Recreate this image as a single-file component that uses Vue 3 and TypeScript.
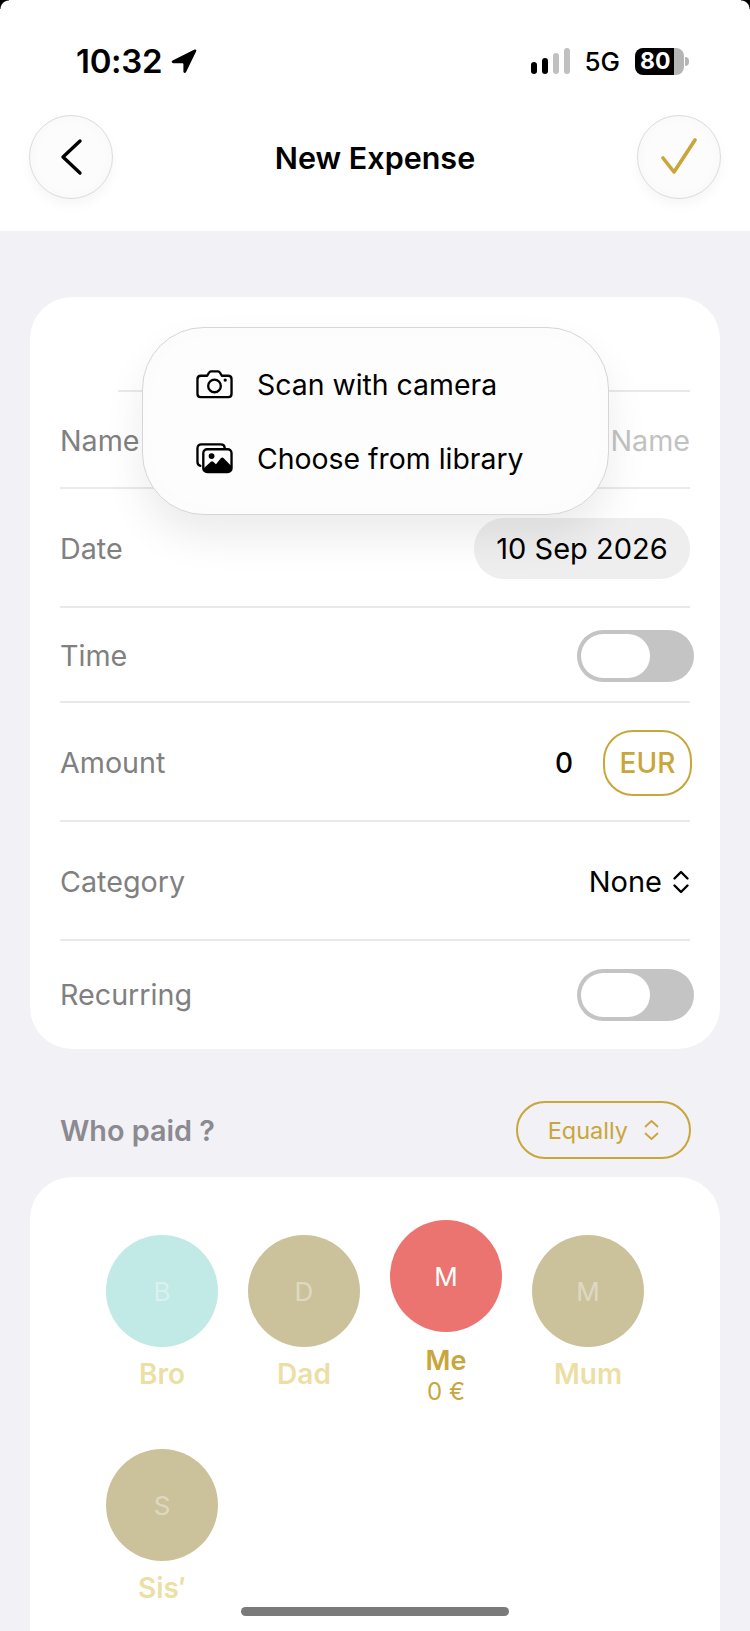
<script setup lang="ts">
interface Member {
  name: string
  initial: string
  color: string
  selected?: boolean
  amount?: string
}

const members: Member[] = [
  {name: "Bro", initial: "B", color: "#c1e9e6"},
  {name: "Dad", initial: "D", color: "#cbc29c"},
  {name: "Me", initial: "M", color: "#ec7470", selected: true, amount: "0 €"},
  {name: "Mum", initial: "M", color: "#cbc29c"},
  {name: "Sis′", initial: "S", color: "#cbc29c"},
]
</script>

<template>
  <div class="screen">
    <header class="top">
      <div class="status">
        <div class="clock">
          <span>10:32</span>
          <svg width="27" height="26" viewBox="0 0 27 26">
            <path d="M24.5 1.6 2.6 12.6c-1.5.8-1 2.600.6 2.600h9.400c.5 0 .8.3.8.8v7.500c0 1.700 2 2 2.700.5L26.200 3.300c.6-1.300-.5-2.300-1.700-1.700Z" fill="#000" />
          </svg>
        </div>
        <div class="indicators">
          <div class="signal">
            <i class="bar b1"></i>
            <i class="bar b2"></i>
            <i class="bar b3 off"></i>
            <i class="bar b4 off"></i>
          </div>
          <span class="net">5G</span>
          <div class="battery"><span>80</span></div>
          <i class="nub"></i>
        </div>
      </div>
      <nav class="nav">
        <button class="round">
          <svg width="24" height="38" viewBox="0 0 24 38">
            <path d="M21 3 4 19l17 16" fill="none" stroke="#000" stroke-width="3.4" stroke-linecap="round" stroke-linejoin="round" />
          </svg>
        </button>
        <h1>New Expense</h1>
        <button class="round">
          <svg width="38" height="38" viewBox="0 0 38 38">
            <path d="M3 20 14 34 35 2" fill="none" stroke="#c9a63a" stroke-width="3.6" stroke-linecap="round" stroke-linejoin="round" />
          </svg>
        </button>
      </nav>
    </header>

    <main class="content">
      <section class="card form">
        <div class="row first"></div>
        <div class="row name-row">
          <span class="label">Name</span>
          <span class="placeholder">Name</span>
        </div>
        <div class="row tall">
          <span class="label">Date</span>
          <span class="date">10 Sep 2026</span>
        </div>
        <div class="row short">
          <span class="label">Time</span>
          <span class="toggle"><i></i></span>
        </div>
        <div class="row tall">
          <span class="label">Amount</span>
          <div class="amount">
            <span>0</span>
            <span class="currency">EUR</span>
          </div>
        </div>
        <div class="row tall">
          <span class="label">Category</span>
          <div class="select">
            <span>None</span>
            <svg width="18" height="24" viewBox="0 0 18 24">
              <path d="M2.500 8.500 9 2l6.500 6.500M2.500 15.500 9 22l6.500-6.500" fill="none" stroke="#000" stroke-width="2.400" stroke-linecap="round" stroke-linejoin="round" />
            </svg>
          </div>
        </div>
        <div class="row last">
          <span class="label">Recurring</span>
          <span class="toggle"><i></i></span>
        </div>

        <div class="popup">
          <div class="popup-item">
            <svg width="37" height="30" viewBox="0 0 38 30">
              <path d="M5 6.500h6.500l2-3.300c.4-.7 1-1.200 1.900-1.200h7.200c.9 0 1.500.5 1.900 1.200l2 3.300H33c2 0 3.500 1.500 3.500 3.500v15c0 2-1.500 3.500-3.500 3.500H5c-2 0-3.500-1.500-3.500-3.500V10c0-2 1.500-3.500 3.500-3.500Z" fill="none" stroke="#000" stroke-width="2.400" stroke-linejoin="round" />
              <circle cx="19" cy="17" r="6.500" fill="none" stroke="#000" stroke-width="2.400" />
              <circle cx="30" cy="11" r="1.700" fill="#000" />
            </svg>
            <span>Scan with camera</span>
          </div>
          <div class="popup-item">
            <svg width="37" height="32" viewBox="0 0 38 32">
              <path d="M4.500 24C2.700 23.500 1.500 22 1.500 20V6c0-2.400 1.700-4 4-4h20c2.300 0 3.800 1.300 4 3.500" fill="none" stroke="#000" stroke-width="2.400" stroke-linecap="round" />
              <rect x="7.500" y="7" width="29" height="23.500" rx="4" fill="none" stroke="#000" stroke-width="2.400" />
              <path d="M8 26.500 15 20c1-.9 2-.9 3 0l2.500 2.300 5-6c1-1.100 2-1.100 3 0l8 8.200V27c0 2.200-1.500 4-4 4H11c-2 0-3-2-3-4.500Z" fill="#000" />
              <circle cx="16" cy="14" r="3" fill="#000" />
            </svg>
            <span>Choose from library</span>
          </div>
        </div>
      </section>

      <div class="section-head">
        <h2>Who paid ?</h2>
        <div class="split">
          <span>Equally</span>
          <svg width="17" height="22" viewBox="0 0 17 22">
            <path d="M2.500 7.500 8.500 2l6 5.500M2.500 14.500l6 5.500 6-5.500" fill="none" stroke="#c9a63a" stroke-width="1.800" stroke-linecap="round" stroke-linejoin="round" />
          </svg>
        </div>
      </div>

      <section class="card people">
        <div
          v-for="m in members"
          :key="m.name"
          class="member"
          :class="{selected: m.selected}"
        >
          <div class="avatar" :style="{background: m.color}">
            <span>{{ m.initial }}</span>
          </div>
          <div class="member-name">{{ m.name }}</div>
          <div v-if="m.amount" class="member-amount">{{ m.amount }}</div>
        </div>
      </section>
    </main>

    <div class="home-bar"></div>
  </div>
</template>

<style scoped>
.screen {
  position: relative;
  width: 750px;
  height: 1631px;
  overflow: hidden;
  background: #f1f1f6;
  font-family: Inter, "Liberation Sans", sans-serif;
  color: #000;
}

.top {
  position: relative;
  height: 231px;
  background: #fff;
}

/* rounded display corners caught by the screenshot */
.top::before,
.top::after {
  content: "";
  position: absolute;
  top: 0;
  width: 9px;
  height: 9px;
}

.top::before {
  left: 0;
  background: radial-gradient(circle at 100% 100%, transparent 8px, #000 9px);
}

.top::after {
  right: 0;
  background: radial-gradient(circle at 0 100%, transparent 8px, #000 9px);
}

.status {
  height: 115px;
  box-sizing: border-box;
  padding: 47px 61px 0 76px;
  display: flex;
  justify-content: space-between;
  align-items: flex-start;
}

.clock {
  display: flex;
  align-items: center;
  gap: 8px;
  font-size: 33px;
  font-weight: 600;
  line-height: 28px;
  letter-spacing: -0.3px;
}

.indicators {
  display: flex;
  align-items: center;
  height: 28px;
}

.signal {
  display: flex;
  align-items: flex-end;
  gap: 5px;
  height: 26px;
  margin-right: 14px;
}

.bar {
  width: 6px;
  border-radius: 3px;
  background: #000;
}

.bar.off {
  background: #c0c0c0;
}

.b1 {
  height: 12px;
}

.b2 {
  height: 16px;
}

.b3 {
  height: 21px;
}

.b4 {
  height: 26px;
}

.net {
  font-size: 26px;
  font-weight: 500;
  margin-right: 15px;
}

.battery {
  width: 49px;
  height: 27px;
  border-radius: 8px;
  background: linear-gradient(90deg, #000 80%, #b5b5b5 80%);
  color: #fff;
  font-size: 23px;
  font-weight: 700;
  line-height: 27px;
  padding-left: 5px;
  box-sizing: border-box;
}

.nub {
  width: 4px;
  height: 9px;
  margin-left: 1px;
  border-radius: 0 4px 4px 0;
  background: #b5b5b5;
}

.nav {
  display: flex;
  align-items: center;
  justify-content: space-between;
  padding: 0 29px;
}

.nav h1 {
  margin: 0;
  font-size: 30.5px;
  font-weight: 600;
}

.round {
  width: 84px;
  height: 84px;
  padding: 0;
  display: flex;
  align-items: center;
  justify-content: center;
  border: 1px solid #dcdcdc;
  border-radius: 50%;
  background: #fcfcfc;
  box-shadow: 0 6px 12px rgba(0, 0, 0, 0.04), inset 0 0 14px rgba(0, 0, 0, 0.025);
}

.content {
  padding: 66px 30px 0;
}

.card {
  background: #fff;
  border-radius: 42px;
}

.form {
  position: relative;
  padding: 0 30px;
  height: 752px;
  box-sizing: border-box;
}

.row {
  display: flex;
  align-items: center;
  justify-content: space-between;
  box-sizing: border-box;
  border-bottom: 2px solid #e9e9e9;
}

.row.first {
  height: 95px;
  margin-left: 58px;
}

.row.name-row {
  height: 97px;
}

.row.tall {
  height: 119px;
}

.row.short {
  height: 95px;
}

.row.last {
  height: 106px;
  border-bottom: 0;
}

.label {
  margin-top: 1px;
  font-size: 28.7px;
  color: #808080;
}

.placeholder {
  margin-top: 1px;
  font-size: 28.7px;
  color: #c2c2c2;
}

.date {
  width: 216px;
  height: 61px;
  margin-top: 2px;
  display: flex;
  align-items: center;
  justify-content: center;
  border-radius: 30px;
  background: #eeeeee;
  font-size: 29px;
}

.toggle {
  position: relative;
  width: 117px;
  height: 52px;
  margin-top: 2px;
  margin-right: -4px;
  border-radius: 26px;
  background: #c4c4c4;
}

.toggle i {
  position: absolute;
  left: 4px;
  top: 4px;
  width: 69px;
  height: 44px;
  border-radius: 22px;
  background: #fff;
}

.amount {
  display: flex;
  align-items: center;
  gap: 30px;
  margin-top: 2px;
  margin-right: -2px;
  font-size: 28px;
  font-weight: 500;
}

.currency {
  width: 89px;
  height: 66px;
  display: flex;
  align-items: center;
  justify-content: center;
  box-sizing: border-box;
  border: 2px solid #c9a63a;
  border-radius: 30px;
  color: #c9a63a;
  font-size: 28px;
}

.select {
  display: flex;
  align-items: center;
  gap: 10px;
  margin-top: 2px;
  font-size: 29px;
}

.popup {
  position: absolute;
  left: 112px;
  top: 30px;
  width: 467px;
  height: 188px;
  box-sizing: border-box;
  padding: 29px 0 0 53px;
  display: flex;
  flex-direction: column;
  gap: 20px;
  border: 1px solid #d6d6d6;
  border-radius: 62px;
  background: #fdfdfd;
  box-shadow: 0 22px 40px rgba(0, 0, 0, 0.08), inset 0 0 24px rgba(0, 0, 0, 0.015);
}

.popup-item {
  display: flex;
  align-items: center;
  height: 54px;
  gap: 24px;
  font-size: 28.4px;
}

.section-head {
  display: flex;
  align-items: center;
  justify-content: space-between;
  padding: 52px 30px 18px;
}

.section-head h2 {
  margin: 1px 0 0;
  font-size: 28.8px;
  font-weight: 600;
  color: #8a8a90;
}

.split {
  width: 175px;
  height: 58px;
  margin-right: -1px;
  display: flex;
  align-items: center;
  justify-content: flex-end;
  gap: 15px;
  padding-right: 29px;
  box-sizing: border-box;
  border: 2px solid #c9a63a;
  border-radius: 29px;
  color: #c9a63a;
  font-size: 23.5px;
}

.people {
  height: 520px;
  box-sizing: border-box;
  padding: 58px 0 0 76px;
  display: grid;
  grid-template-columns: repeat(4, 112px);
  grid-auto-rows: 214px;
  column-gap: 30px;
  align-items: start;
}

.member {
  display: flex;
  flex-direction: column;
  align-items: center;
  color: #ecdfa5;
}

.avatar {
  width: 112px;
  height: 112px;
  display: flex;
  align-items: center;
  justify-content: center;
  border-radius: 50%;
  font-size: 26px;
  color: rgba(255, 255, 255, 0.4);
}

.member-name {
  margin-top: 10px;
  font-size: 28px;
  line-height: 34px;
  font-weight: 600;
}

.member.selected {
  margin-top: -15px;
  color: #c9a63a;
}

.selected .avatar {
  color: #fff;
}

.selected .member-name {
  margin-top: 12px;
  font-size: 27px;
}

.member-amount {
  font-size: 24px;
  line-height: 28px;
}

.home-bar {
  position: absolute;
  left: 241px;
  top: 1607px;
  width: 268px;
  height: 9px;
  border-radius: 5px;
  background: #7a7a7a;
}
</style>

<style>
body {
  background: #fff;
}
</style>
